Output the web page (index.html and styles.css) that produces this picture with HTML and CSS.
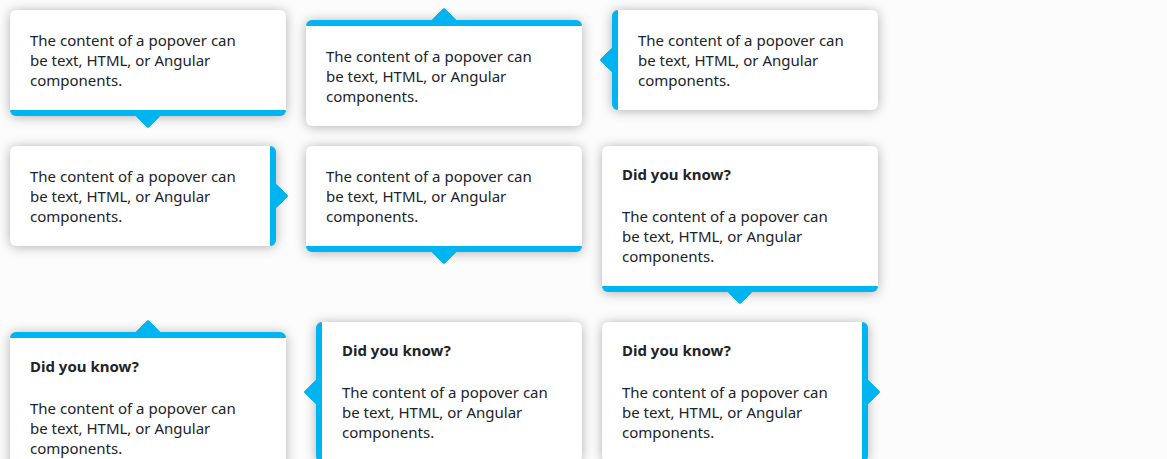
FILE: index.html
```
<!DOCTYPE html>
<html lang="en">
<head>
<meta charset="utf-8">
<meta name="viewport" content="width=device-width, initial-scale=1">
<title>Popovers</title>
<link rel="stylesheet" href="styles.css">
</head>
<body>
<main class="popovers">
  <section class="popover popover-above"><div class="popover-body">
    <p>The content of a popover can be text, HTML, or Angular components.</p>
  </div></section>
  <section class="popover popover-below"><div class="popover-body">
    <p>The content of a popover can be text, HTML, or Angular components.</p>
  </div></section>
  <section class="popover popover-right"><div class="popover-body">
    <p>The content of a popover can be text, HTML, or Angular components.</p>
  </div></section>
  <section class="popover popover-left"><div class="popover-body">
    <p>The content of a popover can be text, HTML, or Angular components.</p>
  </div></section>
  <section class="popover popover-above"><div class="popover-body">
    <p>The content of a popover can be text, HTML, or Angular components.</p>
  </div></section>
  <section class="popover popover-above"><div class="popover-body">
    <h2>Did you know?</h2>
    <p>The content of a popover can be text, HTML, or Angular components.</p>
  </div></section>
  <section class="popover popover-below"><div class="popover-body">
    <h2>Did you know?</h2>
    <p>The content of a popover can be text, HTML, or Angular components.</p>
  </div></section>
  <section class="popover popover-right"><div class="popover-body">
    <h2>Did you know?</h2>
    <p>The content of a popover can be text, HTML, or Angular components.</p>
  </div></section>
  <section class="popover popover-left"><div class="popover-body">
    <h2>Did you know?</h2>
    <p>The content of a popover can be text, HTML, or Angular components.</p>
  </div></section>
</main>
</body>
</html>
```
FILE: styles.css
```
* {
  box-sizing: border-box;
}

body {
  margin: 0;
  background: #fcfcfc;
  color: #212327;
  font: 15px/20px "Noto Sans", "Open Sans", sans-serif;
}

.popovers {
  display: grid;
  grid-template-columns: repeat(auto-fill, 276px);
  align-items: start;
  gap: 20px;
  padding: 10px;
}

.popover-body {
  position: relative;
  padding: 20px;
  border: 0 solid #00b4f1;
  border-radius: 6px;
  background: #fff;
  box-shadow: 0 1px 12px rgba(0, 0, 0, 0.3);
}

.popover-body h2 {
  margin: 0 0 24px;
  font-size: 15px;
  line-height: 16px;
  font-weight: 700;
}

.popover-body p {
  max-width: 220px;
  margin: 0;
}

/* Arrow: a rounded square turned on its corner, half hidden by the edge bar */
.popover-body::after {
  content: "";
  position: absolute;
  width: 18px;
  height: 18px;
  border-radius: 2px;
  background: #00b4f1;
  transform: rotate(45deg);
}

.popover-above {
  padding-bottom: 10px;
}

.popover-above .popover-body {
  border-bottom-width: 6px;
}

.popover-above .popover-body::after {
  left: calc(50% - 9px);
  bottom: -15px;
  clip-path: polygon(100% 0, 100% 100%, 0 100%);
}

.popover-below {
  padding-top: 10px;
}

.popover-below .popover-body {
  border-top-width: 6px;
}

.popover-below .popover-body::after {
  left: calc(50% - 9px);
  top: -15px;
  clip-path: polygon(0 0, 100% 0, 0 100%);
}

.popover-right {
  padding-left: 10px;
}

.popover-right .popover-body {
  border-left-width: 6px;
}

.popover-right .popover-body::after {
  left: -15px;
  top: calc(50% - 9px);
  clip-path: polygon(0 0, 100% 100%, 0 100%);
}

.popover-left {
  padding-right: 10px;
}

.popover-left .popover-body {
  border-right-width: 6px;
}

.popover-left .popover-body::after {
  right: -15px;
  top: calc(50% - 9px);
  clip-path: polygon(0 0, 100% 0, 100% 100%);
}
```
